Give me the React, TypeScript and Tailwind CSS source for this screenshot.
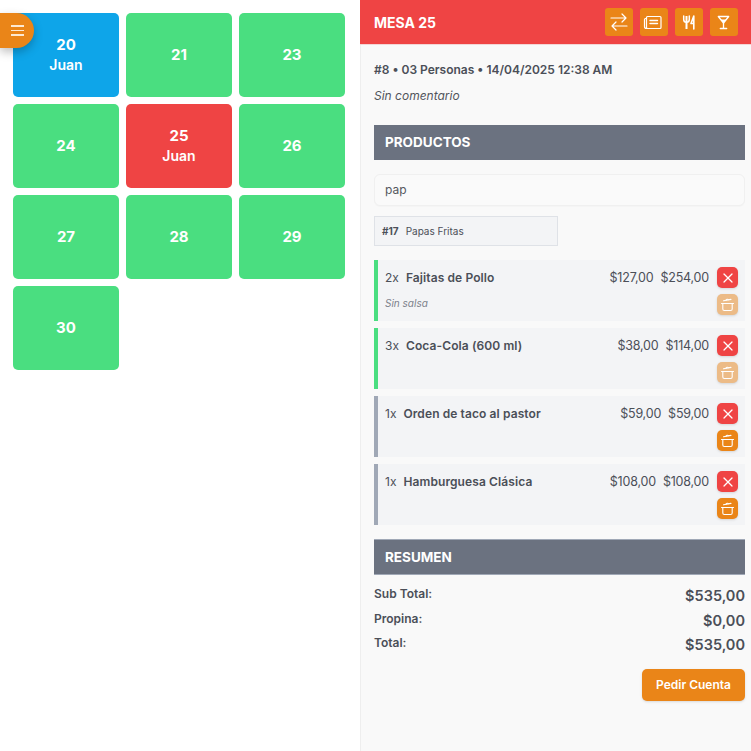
import React from "react";
import { X } from "lucide-react";

const tables = [
  { n: 20, who: "Juan", bg: "bg-[#0ea5e9]" },
  { n: 21 }, { n: 23 }, { n: 24 },
  { n: 25, who: "Juan", bg: "bg-[#ef4444]" },
  { n: 26 }, { n: 27 }, { n: 28 }, { n: 29 }, { n: 30 },
];

const items = [
  { q: "2x", name: "Fajitas de Pollo", p: "$127,00", t: "$254,00", note: "Sin salsa", green: true },
  { q: "3x", name: "Coca-Cola (600 ml)", p: "$38,00", t: "$114,00", green: true },
  { q: "1x", name: "Orden de taco al pastor", p: "$59,00", t: "$59,00" },
  { q: "1x", name: "Hamburguesa Clásica", p: "$108,00", t: "$108,00" },
];

function HeadBtn({ children }: { children: React.ReactNode }) {
  return (
    <button className="w-[28px] h-[28px] rounded-[3px] bg-[#ea8518] flex items-center justify-center text-white">
      <svg width="28" height="28" viewBox="0 0 28 28" fill="none" stroke="currentColor" strokeWidth="1.2" strokeLinecap="round" strokeLinejoin="round">
        {children}
      </svg>
    </button>
  );
}

function Pot() {
  return (
    <svg width="21" height="21" viewBox="0 0 21 21" fill="none" stroke="currentColor" strokeWidth="1.1" strokeLinecap="round" strokeLinejoin="round">
      <path d="M4.5 9.5H16.5" />
      <path d="M5.8 9.5V15A1.5 1.5 0 0 0 7.3 16.5H13.7A1.5 1.5 0 0 0 15.2 15V9.5" />
      <path d="M6.5 6.8L14 5.4" />
      <path d="M9 6.2A1.5 1.5 0 0 1 11.4 5.7" />
    </svg>
  );
}

export default function App() {
  return (
    <div className="flex w-[751px] h-[751px] overflow-hidden bg-white text-[#4b4f58]" style={{ fontFamily: "Inter, 'Liberation Sans', sans-serif" }}>
      <div className="relative w-[360px] shrink-0 pl-[13px] pr-[15px] pt-[13px]">
        <button className="absolute left-0 top-[13px] z-10 w-[34px] h-[35px] rounded-r-full bg-[#ea8518] flex flex-col gap-[3px] items-center justify-center shadow-[0_4px_10px_rgba(0,0,0,0.25)]">
          <span className="block w-[13px] h-[1.5px] bg-[#fde9d2]" />
          <span className="block w-[13px] h-[1.5px] bg-[#fde9d2]" />
          <span className="block w-[13px] h-[1.5px] bg-[#fde9d2]" />
        </button>
        <div className="grid grid-cols-3 gap-[7px]">
          {tables.map((t) => (
            <div key={t.n} className={`h-[84px] rounded-[5px] flex flex-col items-center justify-center text-white font-bold text-[15px] leading-[20px] ${t.bg ?? "bg-[#4ade80]"}`}>
              <span>{t.n}</span>
              {t.who && <span className="text-[14px] font-semibold">{t.who}</span>}
            </div>
          ))}
        </div>
      </div>
      <div className="flex-1 bg-[#f9f9f9] border-l border-[#eeeeee]">
        <div className="-ml-px h-[45px] bg-[#ef4444] border-b border-[#f3d6d6] flex items-center justify-between pl-[14px] pr-[13px]">
          <span className="text-white font-bold text-[14px]">MESA 25</span>
          <div className="flex gap-[7px]">
            <HeadBtn>
              <path d="M6 10H21M17 6L21 10L17 14" />
              <path d="M22 18H7M11 14L7 18L11 22" />
            </HeadBtn>
            <HeadBtn>
              <rect x="6.5" y="8.5" width="14.5" height="12" rx="1" />
              <path d="M6.5 10.5H5.5A1 1 0 0 0 4.5 11.5V18.5A2 2 0 0 0 6.5 20.5" />
              <path d="M10 12.5H17.5M10 15.5H17.5" strokeWidth="1.4" />
            </HeadBtn>
            <HeadBtn>
              <g strokeWidth="1.5">
                <path d="M8.7 8V11.5C8.7 13.2 9.8 14.3 11.5 14.3C13.2 14.3 14.3 13.2 14.3 11.5V8" />
                <path d="M11.5 8V21" strokeWidth="2" strokeLinecap="butt" />
                <path d="M18.8 8L16 15.5H18.8M18.8 8V21" strokeWidth="1.6" />
              </g>
            </HeadBtn>
            <HeadBtn>
              <path d="M8.3 8.5H18.7L13.5 15Z" strokeWidth="1.3" />
              <path d="M10.5 11.5H16.5L13.5 15Z" fill="currentColor" stroke="none" />
              <path d="M13.5 15V20.5M10.3 20.5H16.7" strokeWidth="1.3" />
            </HeadBtn>
          </div>
        </div>
        <div className="pl-[13px] pr-[6px]">
          <p className="mt-[16px] text-[12px] leading-[18px] font-semibold">#8 • 03 Personas • 14/04/2025 12:38 AM</p>
          <p className="mt-[8px] text-[12px] leading-[18px] italic text-[#52555c]">Sin comentario</p>
          <div className="mt-[20px] h-[35px] bg-[#6b7280] flex items-center px-[11px] text-white font-bold text-[13.5px]">PRODUCTOS</div>
          <div className="mt-[14px] h-[32px] rounded-[6px] border border-[#f0f0f0] bg-[#fafafa] flex items-center px-[10px] text-[12px] text-[#555860] shadow-[0_1px_1px_rgba(0,0,0,0.02)]">pap</div>
          <div className="mt-[10px] w-[184px] h-[30px] bg-[#f3f4f6] border border-[#dfe2e7] flex items-center px-[7px] gap-[7px] text-[10px]">
            <span className="font-bold">#17</span><span>Papas Fritas</span>
          </div>
          <div className="mt-[14px] flex flex-col gap-[7px]">
            {items.map((it) => (
              <div key={it.name} className={`h-[61px] bg-[#f3f4f6] border-l-[4px] ${it.green ? "border-[#4ade80]" : "border-[#a0a8b6]"} pl-[7px] pr-[7px] pt-[7px]`}>
                <div className="flex items-start justify-between">
                  <div className="flex-1 min-w-0">
                    <div className="flex justify-between items-center h-[21px] text-[12px]">
                      <div className="flex gap-[7px]">
                        <span>{it.q}</span>
                        <span className="font-semibold tracking-[0.1px]">{it.name}</span>
                      </div>
                      <div className="flex gap-[7px] pr-[8px] pt-[1px] text-[12.5px] tracking-[-0.2px]">
                        <span>{it.p}</span><span>{it.t}</span>
                      </div>
                    </div>
                    {it.note && <p className="mt-[8px] text-[10px] leading-[14px] italic text-[#7c818b]">{it.note}</p>}
                  </div>
                  <div className="flex flex-col gap-[6px]">
                    <button className="w-[21px] h-[21px] rounded-[5px] bg-[#ef4444] flex items-center justify-center text-white shadow-sm"><X size={16} strokeWidth={1.8} /></button>
                    <button className={`w-[21px] h-[21px] rounded-[5px] flex items-center justify-center text-white shadow-sm ${it.green ? "bg-[#ecbb87]" : "bg-[#ea8518]"}`}><Pot /></button>
                  </div>
                </div>
              </div>
            ))}
          </div>
          <div className="mt-[14px] h-[36px] bg-[#6b7280] border border-[#a0a8b6] border-x-0 flex items-center px-[11px] text-white font-bold text-[13.5px]">RESUMEN</div>
          <div className="mt-[10px] flex flex-col gap-[4.5px]">
            {[["Sub Total:", "$535,00"], ["Propina:", "$0,00"], ["Total:", "$535,00"]].map(([a, b]) => (
              <div key={a} className="flex justify-between items-start h-[20px]">
                <span className="text-[12px] font-semibold leading-[18px]">{a}</span>
                <span className="text-[14.5px] font-semibold leading-[21px]">{b}</span>
              </div>
            ))}
          </div>
          <div className="mt-[15px] flex justify-end">
            <button className="w-[103px] h-[32px] rounded-[5px] bg-[#ea8518] text-white text-[12px] font-semibold shadow-sm">Pedir Cuenta</button>
          </div>
        </div>
      </div>
    </div>
  );
}
